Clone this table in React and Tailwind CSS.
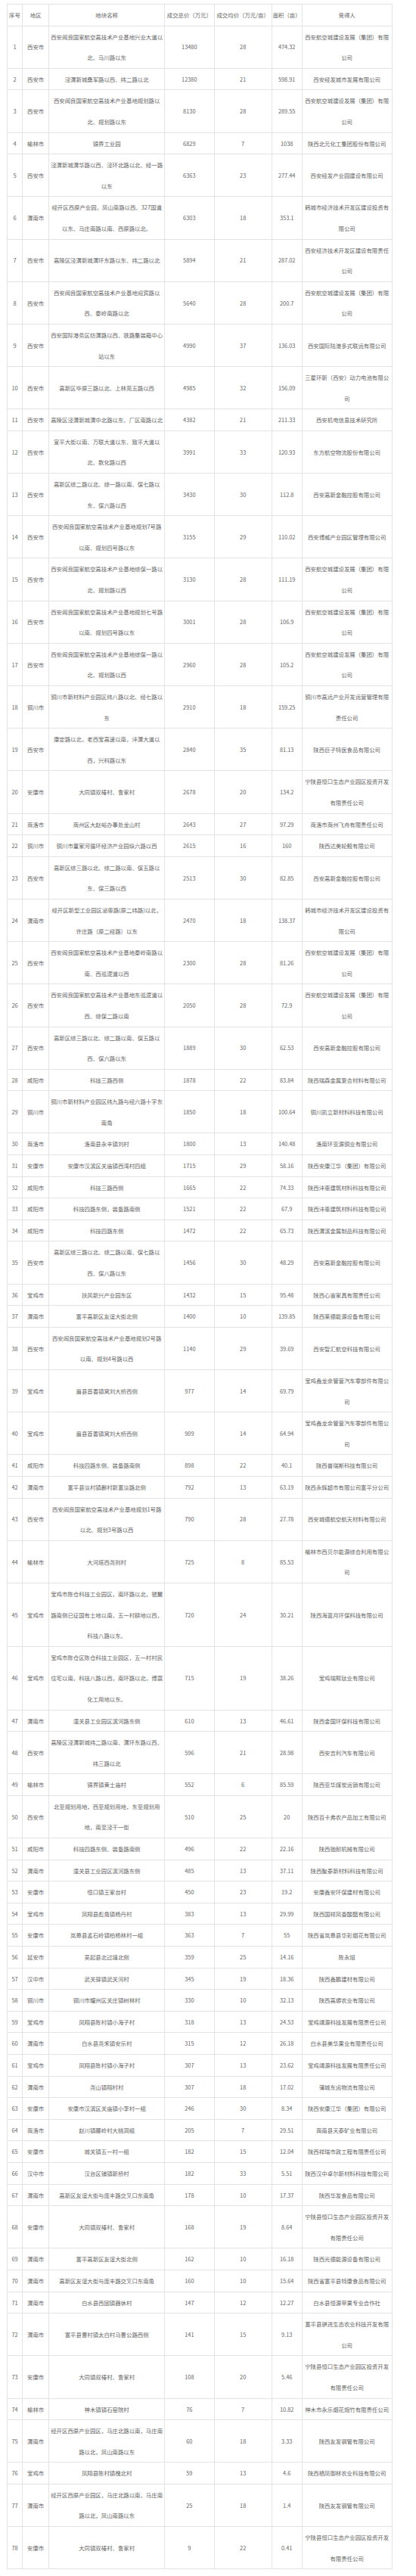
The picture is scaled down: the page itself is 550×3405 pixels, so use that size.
const rows = [
  ["西安市", "西安阎良国家航空高技术产业基地兴业大道以北、马川路以东", "13480", "28", "474.32", "西安航空城建设发展（集团）有限公司"],
  ["西安市", "泾渭新城桑军路以西、纬二路以北", "12380", "21", "598.91", "西安经发城市发展有限公司"],
  ["西安市", "西安阎良国家航空高技术产业基地规划路以北、规划路以东", "8130", "28", "289.55", "西安航空城建设发展（集团）有限公司"],
  ["榆林市", "锦界工业园", "6829", "7", "1038", "陕西北元化工集团股份有限公司"],
  ["西安市", "泾渭新城渭华路以西、泾环北路以北、经一路以东", "6363", "23", "277.44", "西安经发产业园建设有限公司"],
  ["渭南市", "经开区西原产业园，凤山南路以西、327国道以东、马庄南路以南、西原路以北。", "6303", "18", "353.1", "韩城市经济技术开发区建设投资有限公司"],
  ["西安市", "高陵区泾渭新城渭环东路以东、纬二路以北", "5894", "21", "287.02", "西安经济技术开发区建设有限责任公司"],
  ["西安市", "西安阎良国家航空高技术产业基地迎宾路以西、秦岭南路以北", "5640", "28", "200.7", "西安航空城建设发展（集团）有限公司"],
  ["西安市", "西安国际港务区纺渭路以西、铁路集装箱中心站以东", "4990", "37", "136.03", "西安国际陆港多式联运有限公司"],
  ["西安市", "高新区毕原三路以北、上林苑五路以西", "4985", "32", "156.09", "三星环新（西安）动力电池有限公司"],
  ["西安市", "高陵区泾渭新城渭中北路以东、厂区南路以北", "4382", "21", "211.33", "西安机电信息技术研究所"],
  ["西安市", "宣平大街以南、万联大道以东、致平大道以北、数化路以西", "3991", "33", "120.93", "东方航空物流股份有限公司"],
  ["西安市", "高新区综二路以北、综一路以南、保七路以东、保六路以西", "3430", "30", "112.8", "西安高新金融控股有限公司"],
  ["西安市", "西安阎良国家航空高技术产业基地规划7号路以南、规划四号路以东", "3155", "29", "110.02", "西安博威产业园区管理有限公司"],
  ["西安市", "西安阎良国家航空高技术产业基地综保一路以北、规划路以西", "3130", "28", "111.19", "西安航空城建设发展（集团）有限公司"],
  ["西安市", "西安阎良国家航空高技术产业基地规划七号路以南、规划四号路以东", "3001", "28", "106.9", "西安航空城建设发展（集团）有限公司"],
  ["西安市", "西安阎良国家航空高技术产业基地综保一路以北、规划路以西", "2960", "28", "105.2", "西安航空城建设发展（集团）有限公司"],
  ["铜川市", "铜川市新材料产业园区纬八路以北、经七路以东", "2910", "18", "159.25", "铜川市高远产业开发运营管理有限责任公司"],
  ["西安市", "康定路以北，老西宝高速以南，沣渭大道以西，兴科路以东", "2840", "35", "81.13", "陕西巨子特医食品有限公司"],
  ["安康市", "大同镇双椿村、鲁家村", "2678", "20", "134.2", "宁陕县恒口生态产业园区投资开发有限责任公司"],
  ["商洛市", "商州区大赵峪办事处龙山村", "2643", "27", "97.29", "商洛市商州飞舟有限责任公司"],
  ["铜川市", "铜川市董家河循环经济产业园纵六路以西", "2615", "16", "160", "陕西达美轮毂有限公司"],
  ["西安市", "高新区综三路以北、综二路以南、保五路以东、保三路以西", "2513", "30", "82.85", "西安高新金融控股有限公司"],
  ["渭南市", "经开区新型工业园区泌惠路(原二纬路)以北，许庄路（原二经路）以东", "2470", "18", "138.37", "韩城市经济技术开发区建设投资有限公司"],
  ["西安市", "西安阎良国家航空高技术产业基地秦岭南路以南、西巡逻道以西", "2300", "28", "81.26", "西安航空城建设发展（集团）有限公司"],
  ["西安市", "西安阎良国家航空高技术产业基地东巡逻道以西、综保二路以南", "2050", "28", "72.9", "西安航空城建设发展（集团）有限公司"],
  ["西安市", "高新区综三路以北、综二路以南、保五路以西、保六路以东", "1889", "30", "62.53", "西安高新金融控股有限公司"],
  ["咸阳市", "科技三路西侧", "1878", "22", "83.84", "陕西瑞森金属复合材料有限公司"],
  ["铜川市", "铜川市新材料产业园区纬九路与经六路十字东南角", "1850", "18", "100.64", "铜川凯立新材料科技有限公司"],
  ["商洛市", "洛南县永丰镇刘村", "1800", "13", "140.48", "洛南环亚源铜业有限公司"],
  ["安康市", "安康市汉滨区关庙镇西湾村四组", "1715", "29", "58.16", "陕西安康江华（集团）有限公司"],
  ["咸阳市", "科技三路西侧", "1665", "22", "74.33", "陕西沣惠建筑材料科技有限公司"],
  ["咸阳市", "科技四路东侧，装备路南侧", "1521", "22", "67.9", "陕西沣惠建筑材料科技有限公司"],
  ["咸阳市", "科技四路东侧", "1472", "22", "65.73", "陕西渭滨金属制品科技有限公司"],
  ["西安市", "高新区综三路以北、综二路以南、保七路以西、保八路以东", "1456", "30", "48.29", "西安高新金融控股有限公司"],
  ["宝鸡市", "扶风新兴产业园东区", "1432", "15", "95.48", "陕西心宙家具有限责任公司"],
  ["渭南市", "富平高新区友谊大街北侧", "1400", "10", "139.85", "陕西莱德能源设备有限公司"],
  ["西安市", "西安阎良国家航空高技术产业基地规划2号路以南、规划4号路以西", "1140", "29", "39.69", "西安智汇航空科技有限公司"],
  ["宝鸡市", "眉县首善镇窝刘大桥西侧", "977", "14", "69.79", "宝鸡鑫龙余管营汽车零部件有限公司"],
  ["宝鸡市", "眉县首善镇窝刘大桥西侧", "909", "14", "64.94", "宝鸡鑫龙余管营汽车零部件有限公司"],
  ["咸阳市", "科技四路东侧、装备路南侧", "898", "22", "40.1", "陕西普瑞斯科技有限公司"],
  ["渭南市", "富平县淡村镇鄜村新富淡路北侧", "792", "13", "63.19", "陕西永辉超市有限公司富平分公司"],
  ["西安市", "西安阎良国家航空高技术产业基地规划1号路以北、规划3号路以西", "790", "28", "27.78", "西安城德航空航天材料有限公司"],
  ["榆林市", "大河塔西尧则村", "725", "8", "85.53", "榆林市西贝尔能源综合利用有限公司"],
  ["宝鸡市", "宝鸡市陈仓科技工业园区，南环路以北，虢麓路南侧已征国有土地以南，五一村耕地以西，科技八路以东。", "720", "24", "30.21", "陕西海蓝月环保科技有限公司"],
  ["宝鸡市", "宝鸡市陈仓区陈仓科技工业园区，五一村村民住宅以南，科技八路以西，南环路以北，博赢化工用地以东。", "715", "19", "38.26", "宝鸡瑞熙钛业有限公司"],
  ["渭南市", "潼关县工业园区滨河路东侧", "610", "13", "46.61", "陕西金国环保科技有限公司"],
  ["西安市", "高陵区泾渭新城纬二路以南、渭环东路以西、纬三路以北", "596", "21", "28.98", "西安吉利汽车有限公司"],
  ["榆林市", "锦界镇黄土庙村", "552", "6", "85.59", "陕西亚华煤炭运销有限公司"],
  ["西安市", "北至规划用地，西至规划用地，东至规划用地，南至泾干一街", "510", "25", "20", "陕西百卡弗农产品加工有限公司"],
  ["咸阳市", "科技四路东侧、装备路南侧", "496", "22", "22.16", "陕西驰耐机械有限公司"],
  ["渭南市", "潼关县工业园区滨河路东侧", "485", "13", "37.11", "陕西聚泰新材料科技有限公司"],
  ["安康市", "恒口镇王家台村", "450", "23", "19.2", "安康鑫安环保建材有限公司"],
  ["宝鸡市", "凤翔县彪角镇杨丹村", "383", "13", "29.99", "陕西国祥凤香酸醋有限公司"],
  ["安康市", "岚皋县孟石岭镇柏杨林村一组", "363", "7", "55", "陕西省岚皋县华彩烟花有限公司"],
  ["延安市", "吴起县北过境北侧", "359", "25", "14.16", "陈永旭"],
  ["汉中市", "武关驿镇武关河村", "345", "19", "18.36", "陕西鑫鹏建材有限公司"],
  ["铜川市", "铜川市耀州区关庄镇树林村", "330", "10", "32.13", "陕西高塬农业有限公司"],
  ["宝鸡市", "凤翔县陈村镇小海子村", "318", "13", "24.53", "宝鸡靖源科技发展有限责任公司"],
  ["渭南市", "白水县尧禾镇安乐村", "315", "12", "26.18", "白水县美华果业有限责任公司"],
  ["宝鸡市", "凤翔县陈村镇小海子村", "307", "13", "23.62", "宝鸡靖源科技发展有限责任公司"],
  ["渭南市", "尧山镇翔村村", "307", "18", "17.02", "蒲城东运物流有限公司"],
  ["安康市", "安康市汉滨区关庙镇小李村一组", "246", "30", "8.34", "陕西安康江华（集团）有限公司"],
  ["商洛市", "赵川镇腰岭村大桃洞组", "205", "7", "29.51", "商南县天泰矿业有限公司"],
  ["安康市", "城关镇五一村一组", "182", "15", "12.04", "陕西祥瑞市政工程有限责任公司"],
  ["汉中市", "汉台区铺镇新桥村", "182", "33", "5.51", "陕西汉中卓尔新材料科技有限公司"],
  ["渭南市", "高新区友谊大街与庞丰路交叉口东南角", "178", "10", "17.37", "陕西华发食品有限公司"],
  ["安康市", "大同镇双椿村、鲁家村", "168", "19", "8.64", "宁陕县恒口生态产业园区投资开发有限责任公司"],
  ["渭南市", "富平高新区友谊大街北侧", "162", "10", "16.18", "陕西光德能源设备有限公司"],
  ["渭南市", "高新区友谊大街与庞丰路交叉口东南角", "160", "10", "15.64", "陕西省富平县特康食品有限公司"],
  ["渭南市", "白水县西固镇器休村", "147", "12", "12.27", "白水县恒源苹果专业合作社"],
  ["渭南市", "富平县曹村镇太白村马曹公路西侧", "141", "15", "9.13", "富平县骐进生态农业科技开发有限公司"],
  ["安康市", "大同镇双椿村、鲁家村", "108", "20", "5.46", "宁陕县恒口生态产业园区投资开发有限责任公司"],
  ["榆林市", "神木镇镇石窑院村", "76", "7", "10.82", "神木市永乐烟花炮竹有限责任公司"],
  ["渭南市", "经开区西原产业园区，马庄北路以南，马庄南路以北，凤山南路以东", "60", "18", "3.33", "陕西友发钢管有限公司"],
  ["宝鸡市", "凤翔县陈村镇槐北村", "59", "13", "4.6", "陕西栖凤御林农业科技有限公司"],
  ["渭南市", "经开区西原产业园区，马庄北路以南，马庄南路以北，凤山南路以东", "25", "18", "1.4", "陕西友发钢管有限公司"],
  ["安康市", "大同镇双椿村、鲁家村", "9", "22", "0.41", "宁陕县恒口生态产业园区投资开发有限责任公司"],
];

const headers = ["序号", "地区", "地块名称", "成交总价（万元）", "成交均价（万元/亩）", "面积（亩）", "竞得人"];

const cell = "border border-[#e3e3e3] px-px text-center align-middle";

export default function App() {
  return (
    <div className="bg-white pt-[5px] pl-[9px] font-['Noto_Sans_CJK_SC',sans-serif] text-[#666] text-[7.4px] leading-[27.6px]">
      <table className="w-[508.6px] table-fixed border-collapse">
        <colgroup>
          <col className="w-[20px]" />
          <col className="w-[35.3px]" />
          <col className="w-[152.7px]" />
          <col className="w-[65.7px]" />
          <col className="w-[76px]" />
          <col className="w-[40px]" />
          <col className="w-[118.9px]" />
        </colgroup>
        <thead>
          <tr>
            {headers.map((h) => (
              <td key={h} className={`${cell} whitespace-nowrap px-0`}>
                {h}
              </td>
            ))}
          </tr>
        </thead>
        <tbody>
          {rows.map((r, i) => (
            <tr key={i}>
              <td className={`${cell} px-0`}>{i + 1}</td>
              {r.map((v, j) => (
                <td key={j} className={cell}>
                  {v}
                </td>
              ))}
            </tr>
          ))}
        </tbody>
      </table>
    </div>
  );
}
